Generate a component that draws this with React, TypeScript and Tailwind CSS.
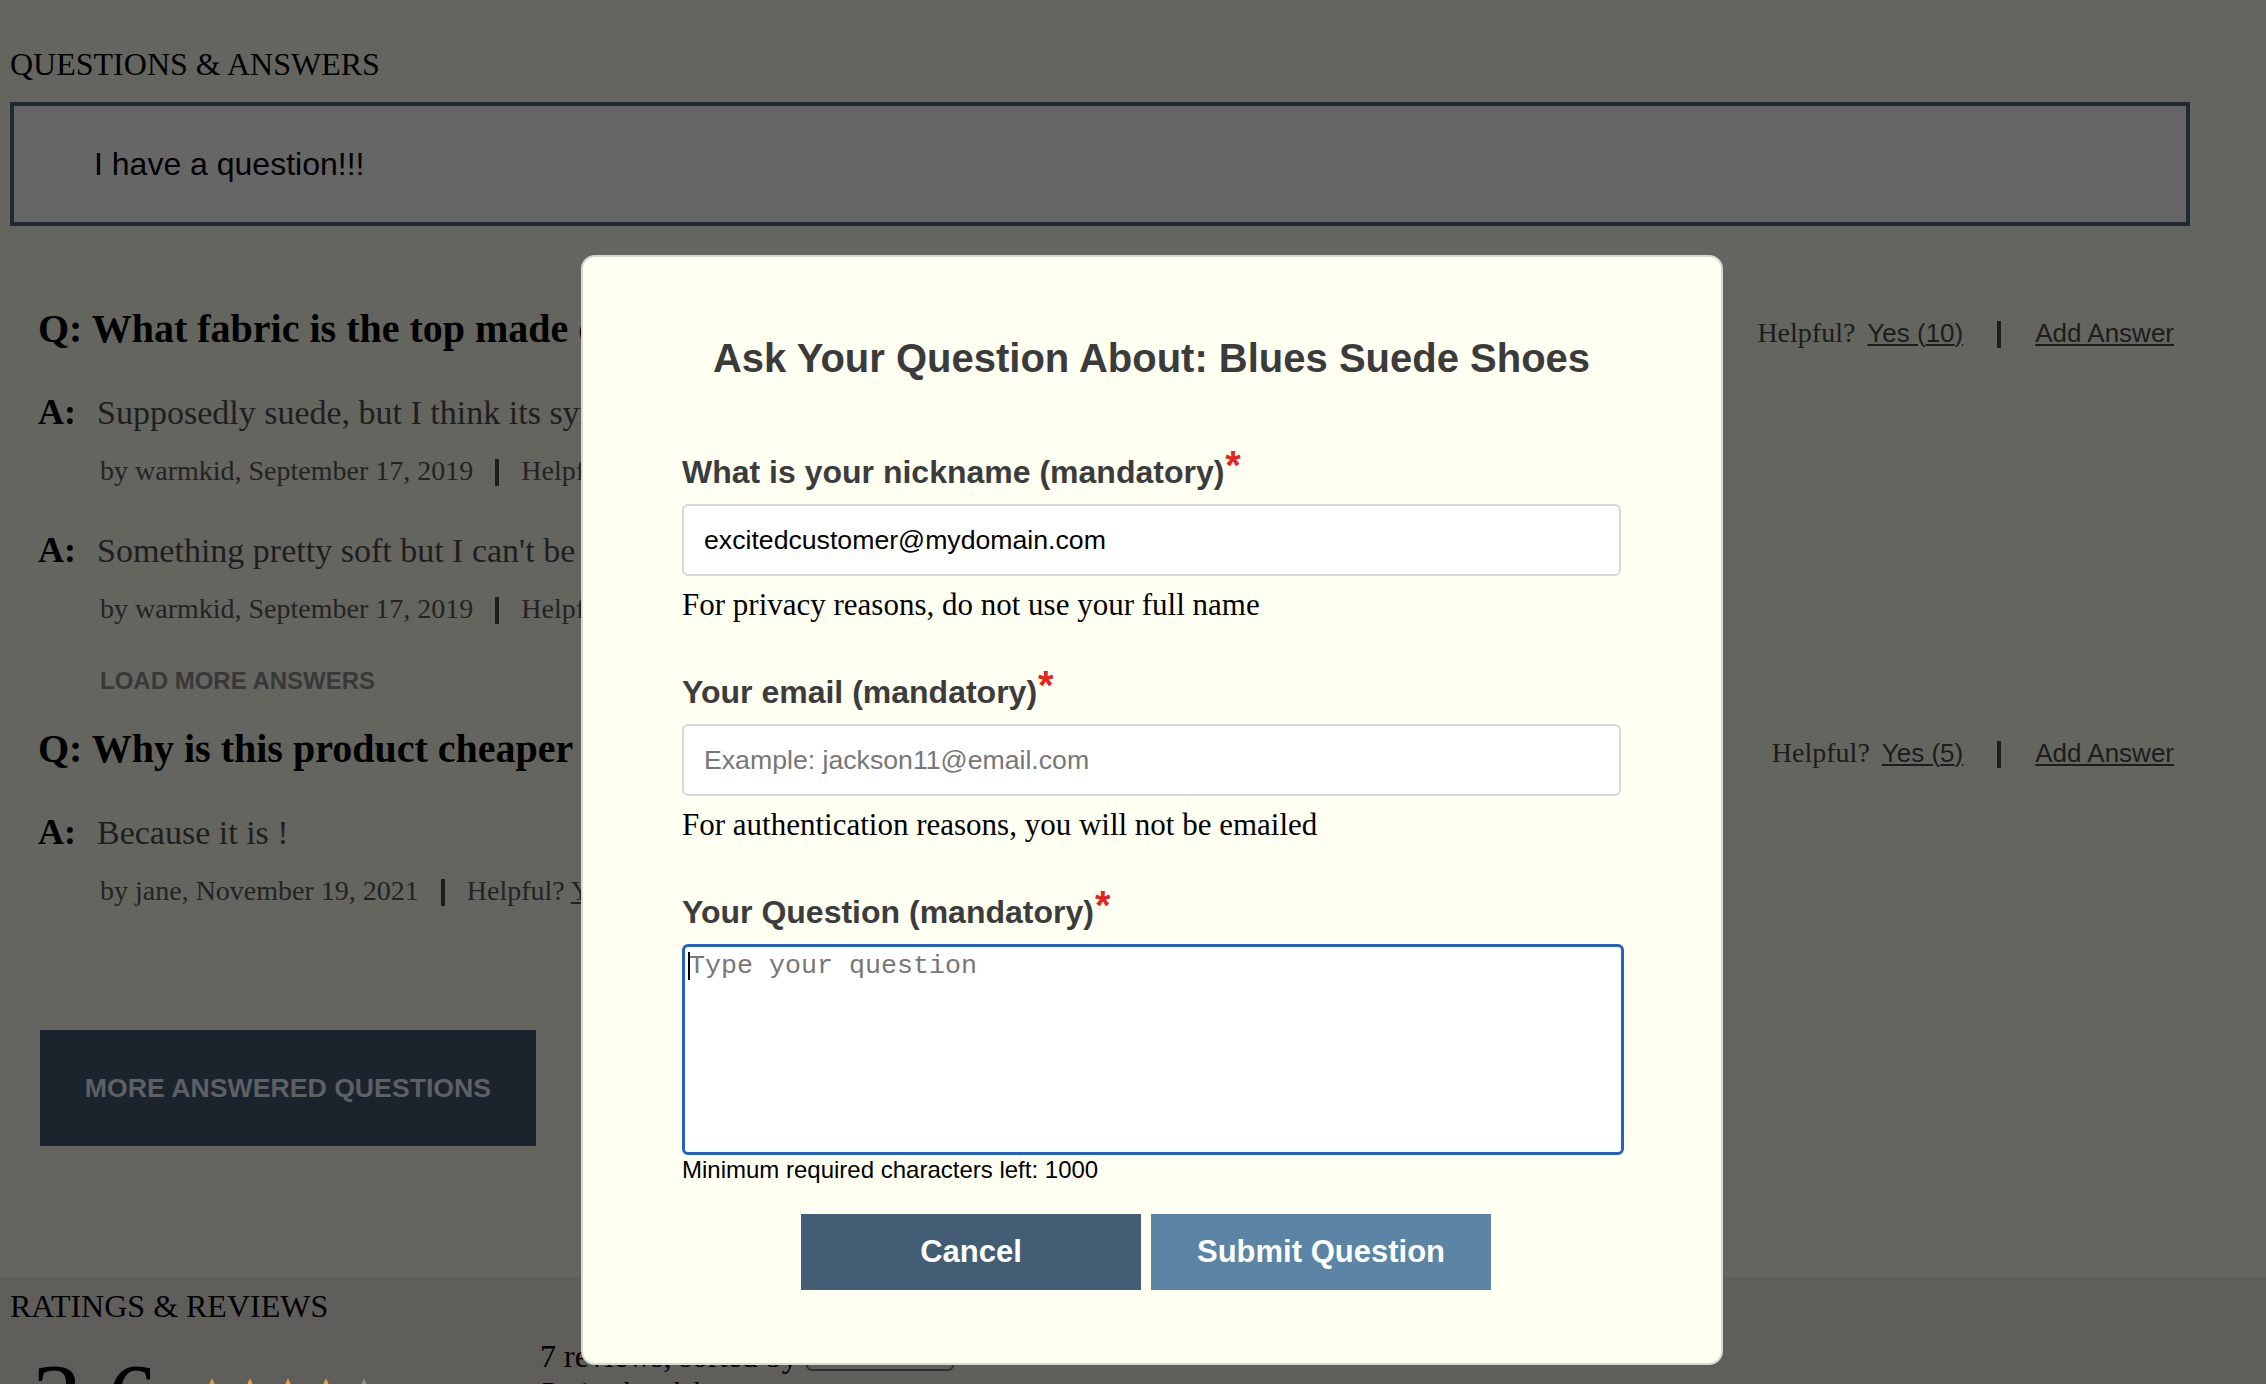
import React from 'react';

type Answer = { body: string; by: string; date: string; yes: number };
type Question = { q: string; yes: number; answers: Answer[] };

const questions: Question[] = [
  {
    q: 'What fabric is the top made of?',
    yes: 10,
    answers: [
      { body: 'Supposedly suede, but I think its synthetic', by: 'warmkid', date: 'September 17, 2019', yes: 3 },
      { body: "Something pretty soft but I can't be sure", by: 'warmkid', date: 'September 17, 2019', yes: 1 },
    ],
  },
  {
    q: 'Why is this product cheaper here than other sites?',
    yes: 5,
    answers: [{ body: 'Because it is !', by: 'jane', date: 'November 19, 2021', yes: 0 }],
  },
];

const Bar = ({ className }: { className: string }) => (
  <span className={`relative top-[6px] inline-block h-[27px] w-[4px] bg-[#1e1e1e] ${className}`} />
);

const HelpfulLinks = ({ yes }: { yes: number }) => (
  <div className="flex shrink-0 items-baseline text-[#1c1c1c]">
    <span className="text-[28px] leading-[28px]">Helpful?</span>
    <a className="ml-[12px] font-['Liberation_Sans',Arial,sans-serif] text-[26px] leading-[26px] underline">
      Yes ({yes})
    </a>
    <Bar className="mx-[34px]" />
    <a className="font-['Liberation_Sans',Arial,sans-serif] text-[26px] leading-[26px] underline">Add Answer</a>
  </div>
);

const AnswerRow = ({ a, first }: { a: Answer; first: boolean }) => (
  <div>
    <div className={`flex items-baseline ${first ? 'mt-[45px]' : 'mt-[47px]'}`}>
      <span className="w-[59px] shrink-0 text-[36px] font-bold leading-[36px] text-black">A:</span>
      <span className="whitespace-nowrap text-[34px] leading-[36px] text-[#1e1e1e]">{a.body}</span>
    </div>
    <p className="ml-[62px] mt-[22px] whitespace-nowrap text-[28px] leading-[28px] text-[#232323]">
      by {a.by}, {a.date}
      <Bar className="mx-[22px]" />
      Helpful? <span className="underline">Yes ({a.yes})</span>
      <Bar className="mx-[22px]" />
      <span className="underline">Report</span>
    </p>
  </div>
);

const Star = ({ fill }: { fill: number }) => (
  <svg width="34" height="34" viewBox="0 0 24 24">
    <defs>
      <linearGradient id={`g${fill}`} x1="0" x2="1" y1="0" y2="0">
        <stop offset={`${fill * 100}%`} stopColor="#e3a23a" />
        <stop offset={`${fill * 100}%`} stopColor="#8d8c88" />
      </linearGradient>
    </defs>
    <path
      d="M12 1.5l3.1 6.9 7.4.7-5.6 5 1.7 7.4L12 17.6l-6.6 3.9 1.7-7.4-5.6-5 7.4-.7z"
      fill={`url(#g${fill})`}
    />
  </svg>
);

const Label = ({ children, className }: { children: React.ReactNode; className: string }) => (
  <p className={`text-[32px] font-bold leading-[32px] text-[#3c3c3c] ${className}`}>
    {children}
    <span className="relative -top-[4px] ml-[1px] text-[40px] font-bold leading-[0] text-[#e3271d]">*</span>
  </p>
);

const AskQuestionModal = () => (
  <div className="absolute left-[581px] top-[255px] h-[1110px] w-[1142px] rounded-[14px] border-2 border-[#d8d8d2] bg-[#fffff2] pl-[99px] pr-[100px] pt-[81px] font-['Liberation_Sans',Arial,sans-serif]">
    <h3 className="text-center text-[40px] font-bold leading-[40px] text-[#3b3b3b]">
      Ask Your Question About: Blues Suede Shoes
    </h3>

    <Label className="mt-[78px]">What is your nickname (mandatory)</Label>
    <input
      readOnly
      defaultValue="excitedcustomer@mydomain.com"
      className="mt-[16px] block h-[72px] w-full rounded-[6px] border-2 border-[#d8d8d8] bg-white px-[20px] text-[26.67px] text-black outline-none"
    />
    <p className="mt-[13px] font-['Liberation_Serif','Times_New_Roman',serif] text-[31px] leading-[31px] text-black">
      For privacy reasons, do not use your full name
    </p>

    <Label className="mt-[56px]">Your email (mandatory)</Label>
    <input
      placeholder="Example: jackson11@email.com"
      className="mt-[16px] block h-[72px] w-full rounded-[6px] border-2 border-[#d8d8d8] bg-white px-[20px] text-[26.67px] text-black outline-none placeholder:text-[#777]"
    />
    <p className="mt-[13px] font-['Liberation_Serif','Times_New_Roman',serif] text-[31px] leading-[31px] text-black">
      For authentication reasons, you will not be emailed
    </p>

    <Label className="mt-[56px]">Your Question (mandatory)</Label>
    <div className="relative mt-[16px]">
      <textarea
        placeholder="Type your question"
        className="block h-[211px] w-[942px] resize-none rounded-[6px] border-[3px] border-[#2261c6] bg-white p-[4px] font-['Liberation_Mono','Courier_New',monospace] text-[26.67px] leading-[30px] outline-none placeholder:text-[#777]"
      />
      <span className="absolute left-[6px] top-[8px] h-[28px] w-[2px] bg-black" />
    </div>
    <p className="mt-[3px] text-[24px] leading-[24px] text-black">Minimum required characters left: 1000</p>

    <div className="mt-[32px] flex justify-center gap-[10px] pr-[11px]">
      <button className="h-[76px] w-[340px] bg-[#435d74] text-[31px] font-bold text-white">Cancel</button>
      <button className="h-[76px] w-[340px] bg-[#5c84a4] text-[31px] font-bold text-white">Submit Question</button>
    </div>
  </div>
);

export default function App() {
  return (
    <div className="relative h-[1384px] w-full overflow-hidden bg-[#64655f] font-['Liberation_Serif','Times_New_Roman',serif] text-black">
      <section className="pl-[10px] pr-[76px]">
        <h2 className="pt-[48px] text-[32px] leading-[32px]">QUESTIONS &amp; ANSWERS</h2>
        <div className="mt-[22px] flex h-[124px] items-center border-4 border-[#1f2933] bg-[#666666] pl-[80px] font-['Liberation_Sans',Arial,sans-serif] text-[32px] leading-[32px]">
          I have a question!!!
        </div>

        <div className="pl-[28px] pr-[16px]">
          {questions.map((q, i) => (
            <div key={q.q}>
              <div className={`flex items-baseline justify-between ${i === 0 ? 'mt-[83px]' : 'mt-[36px]'}`}>
                <p className="whitespace-nowrap text-[40px] font-bold leading-[40px]">Q: {q.q}</p>
                <HelpfulLinks yes={q.yes} />
              </div>
              {q.answers.map((a, j) => (
                <AnswerRow key={j} a={a} first={j === 0} />
              ))}
              {q.answers.length > 1 && (
                <p className="ml-[62px] mt-[46px] font-['Liberation_Sans',Arial,sans-serif] text-[24px] font-bold leading-[24px] text-[#383838]">
                  LOAD MORE ANSWERS
                </p>
              )}
            </div>
          ))}

          <button className="ml-[2px] mt-[125px] h-[116px] w-[496px] bg-[#1b232d] font-['Liberation_Sans',Arial,sans-serif] text-[26.67px] font-bold text-[#5d6064]">
            MORE ANSWERED QUESTIONS
          </button>
        </div>
      </section>

      <section className="mt-[131px] h-[200px] bg-[#5f5e5b] pl-[10px] pt-[13px]">
        <h2 className="text-[32px] leading-[32px]">RATINGS &amp; REVIEWS</h2>
        <div className="mt-[11px] flex items-start">
          <div className="flex w-[530px] items-start pl-[22px]">
            <span className="mt-[16px] text-[100px] leading-[100px]">3.6</span>
            <div className="ml-[38px] mt-[43px] flex gap-[4px]">
              <Star fill={1} />
              <Star fill={1} />
              <Star fill={1} />
              <Star fill={0.6} />
              <Star fill={0} />
            </div>
          </div>
          <div>
            <p className="whitespace-nowrap text-[32px] leading-[32px]">
              7 reviews, sorted by{' '}
              <span className="relative top-[4px] inline-block h-[34px] w-[148px] rounded-[6px] border-2 border-[#2e2e2e] align-baseline" />
            </p>
            <p className="mt-[6px] text-[28px] italic leading-[28px]">Rating breakdown</p>
          </div>
        </div>
      </section>

      <AskQuestionModal />
    </div>
  );
}
